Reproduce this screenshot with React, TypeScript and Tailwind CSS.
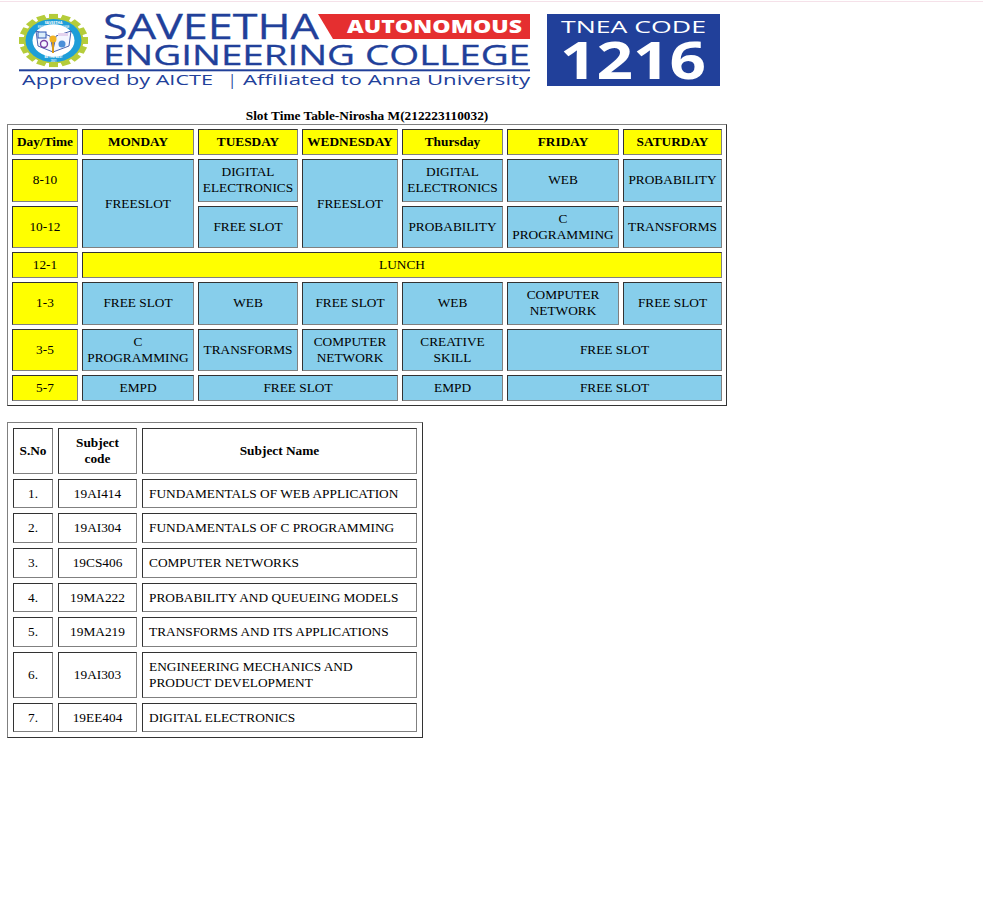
import React from "react";

const C = "border border-solid border-t-[#333] border-l-[#333] border-b-[#808080] border-r-[#808080] px-[3px] py-0 text-center align-middle";
const Y = C + " bg-[#ffff00]";
const B = C + " bg-[#87ceeb]";
const H = Y + " font-bold";
const Y2 = Y + " pb-[1px]";
const B2 = B + " pb-[1px]";

function Logo() {
  const teeth = Array.from({ length: 16 }, (_, i) => (i * 360) / 16);
  return (
    <svg width="722" height="90" viewBox="0 2 722 90" className="block overflow-visible">
      <g fontFamily="'Open Sans', sans-serif">
        <g transform="translate(53.5 40.5) scale(1 0.77) translate(-53 -41)">
          {teeth.map((a) => (
            <rect key={a} x="48.5" y="6.5" width="9" height="8" fill="#b5cc3a" transform={`rotate(${a} 53 41)`} />
          ))}
          <circle cx="53" cy="41" r="30" fill="#b5cc3a" />
          <circle cx="53" cy="41" r="28" fill="#1e9ed8" />
          <circle cx="53" cy="41" r="21" fill="#ffffff" />
        </g>
        <path d="M36 31 L50 36 L53 50 L56 36 L71 31 L69 46 L53 52 L38 46 Z" fill="#f4f6ff" stroke="#1f3f9a" strokeWidth="0.8" />
        <rect x="38" y="32" width="8" height="6" fill="#dbeefa" stroke="#2f55b5" strokeWidth="1" />
        <rect x="58" y="33" width="10" height="3" fill="#e4d3ee" />
        <circle cx="44" cy="44" r="3.500" fill="none" stroke="#7a3fa5" strokeWidth="1.4" />
        <circle cx="62" cy="44" r="3.500" fill="#4a8fd8" />
        <circle cx="53" cy="39" r="3.500" fill="#f0b323" />
        <rect x="52" y="42" width="2" height="11" fill="#d79a1c" />
        <text x="53.500" y="23.500" textAnchor="middle" fontSize="3.500" fontWeight="700" fill="#ffffff">SAVEETHA</text>
        <text x="53.500" y="27.500" textAnchor="middle" fontSize="2.800" fontWeight="600" fill="#ffffff">ENGINEERING COLLEGE</text>
        <text x="53.500" y="58" textAnchor="middle" fontSize="3" fontWeight="700" fill="#ffffff">BE THE BEST</text>
        <text x="53.500" y="62" textAnchor="middle" fontSize="2.500" fontWeight="600" fill="#ffffff">2001</text>

        <path d="M318 14 H530 V39 H333 Z" fill="#e52f30" />
        <text x="103" y="39.300" fontSize="34" fontWeight="500" stroke="#21409a" strokeWidth="0.3" fill="#21409a" textLength="216" lengthAdjust="spacingAndGlyphs">SAVEETHA</text>
        <text x="347" y="33.300" fontSize="17.600" fontWeight="800" fill="#ffffff" textLength="175" lengthAdjust="spacingAndGlyphs">AUTONOMOUS</text>
        <text x="103" y="65" fontSize="27" fontWeight="500" stroke="#21409a" strokeWidth="0.3" fill="#21409a" textLength="427" lengthAdjust="spacingAndGlyphs">ENGINEERING COLLEGE</text>
        <rect x="19" y="69.300" width="511" height="2" fill="#21409a" />
        <text x="22" y="85" fontSize="15" fontWeight="500" fill="#21409a" textLength="191" lengthAdjust="spacingAndGlyphs">Approved by AICTE</text>
        <text x="228" y="85" fontSize="15" fontWeight="500" fill="#21409a">|</text>
        <text x="243" y="85" fontSize="15" fontWeight="500" fill="#21409a" textLength="287" lengthAdjust="spacingAndGlyphs">Affiliated to Anna University</text>

        <rect x="547" y="14" width="173" height="72" fill="#21409a" />
        <text x="561" y="33.300" fontSize="16.500" fontWeight="500" fill="#ffffff" textLength="145" lengthAdjust="spacingAndGlyphs">TNEA CODE</text>
        <text x="560" y="78.500" fontSize="52.500" fontWeight="700" fill="#ffffff" textLength="146" lengthAdjust="spacingAndGlyphs">1216</text>
      </g>
    </svg>
  );
}

export default function App() {
  return (
    <div className="min-h-[903px] bg-white pt-[2px] font-['Liberation_Serif',serif] text-[13.33px] leading-[16px] text-black relative">
      <div className="absolute left-0 right-0 top-[1px] h-px bg-[#f5e1e9]" />
      <Logo />
      <table className="ml-[7px] mt-[16px] w-[720px] table-fixed border-separate border-spacing-1 border border-solid border-t-[#808080] border-l-[#808080] border-b-[#333] border-r-[#333]">
        <caption className="font-bold h-[16px]">Slot Time Table-Nirosha M(212223110032)</caption>
        <colgroup>
          <col className="w-[66px]" />
          <col className="w-[112px]" />
          <col className="w-[100px]" />
          <col className="w-[96px]" />
          <col className="w-[101px]" />
          <col className="w-[112px]" />
          <col className="w-[99px]" />
        </colgroup>
        <tbody>
          <tr className="h-[26px]">
            <td className={H}>Day/Time</td>
            <td className={H}>MONDAY</td>
            <td className={H}>TUESDAY</td>
            <td className={H}>WEDNESDAY</td>
            <td className={H}>Thursday</td>
            <td className={H}>FRIDAY</td>
            <td className={H}>SATURDAY</td>
          </tr>
          <tr className="h-[43px]">
            <td className={Y2}>8-10</td>
            <td className={B} rowSpan={2}>FREESLOT</td>
            <td className={B2}>DIGITAL ELECTRONICS</td>
            <td className={B} rowSpan={2}>FREESLOT</td>
            <td className={B2}>DIGITAL ELECTRONICS</td>
            <td className={B2}>WEB</td>
            <td className={B2}>PROBABILITY</td>
          </tr>
          <tr className="h-[42px]">
            <td className={Y}>10-12</td>
            <td className={B}>FREE SLOT</td>
            <td className={B}>PROBABILITY</td>
            <td className={B}>C PROGRAMMING</td>
            <td className={B}>TRANSFORMS</td>
          </tr>
          <tr className="h-[26px]">
            <td className={Y}>12-1</td>
            <td className={Y} colSpan={6}>LUNCH</td>
          </tr>
          <tr className="h-[43px]">
            <td className={Y2}>1-3</td>
            <td className={B2}>FREE SLOT</td>
            <td className={B2}>WEB</td>
            <td className={B2}>FREE SLOT</td>
            <td className={B2}>WEB</td>
            <td className={B2}>COMPUTER NETWORK</td>
            <td className={B2}>FREE SLOT</td>
          </tr>
          <tr className="h-[42px]">
            <td className={Y}>3-5</td>
            <td className={B}>C PROGRAMMING</td>
            <td className={B}>TRANSFORMS</td>
            <td className={B}>COMPUTER NETWORK</td>
            <td className={B}>CREATIVE SKILL</td>
            <td className={B} colSpan={2}>FREE SLOT</td>
          </tr>
          <tr className="h-[26px]">
            <td className={Y}>5-7</td>
            <td className={B}>EMPD</td>
            <td className={B} colSpan={2}>FREE SLOT</td>
            <td className={B}>EMPD</td>
            <td className={B} colSpan={2}>FREE SLOT</td>
          </tr>
        </tbody>
      </table>

      <table className="ml-[7px] mt-[16px] w-[416px] table-fixed border-separate border-spacing-[5px] border border-solid border-t-[#808080] border-l-[#808080] border-b-[#333] border-r-[#333]">
        <colgroup>
          <col className="w-[40px]" />
          <col className="w-[79px]" />
          <col className="w-[275px]" />
        </colgroup>
        <tbody>
          <tr className="h-[46px]">
            <td className={C + " font-bold"}>S.No</td>
            <td className={C + " font-bold !px-[6px]"}>Subject code</td>
            <td className={C + " font-bold"}>Subject Name</td>
          </tr>
          {[
            ["1.", "19AI414", "FUNDAMENTALS OF WEB APPLICATION", "h-[29px]"],
            ["2.", "19AI304", "FUNDAMENTALS OF C PROGRAMMING", "h-[30px]"],
            ["3.", "19CS406", "COMPUTER NETWORKS", "h-[30px]"],
            ["4.", "19MA222", "PROBABILITY AND QUEUEING MODELS", "h-[29px]"],
            ["5.", "19MA219", "TRANSFORMS AND ITS APPLICATIONS", "h-[30px]"],
            ["6.", "19AI303", "ENGINEERING MECHANICS AND PRODUCT DEVELOPMENT", "h-[46px]"],
            ["7.", "19EE404", "DIGITAL ELECTRONICS", "h-[29px]"],
          ].map((r) => (
            <tr key={r[0]} className={r[3]}>
              <td className={C}>{r[0]}</td>
              <td className={C}>{r[1]}</td>
              <td className={C + " !text-left !px-[6px]"}>{r[2]}</td>
            </tr>
          ))}
        </tbody>
      </table>
    </div>
  );
}
